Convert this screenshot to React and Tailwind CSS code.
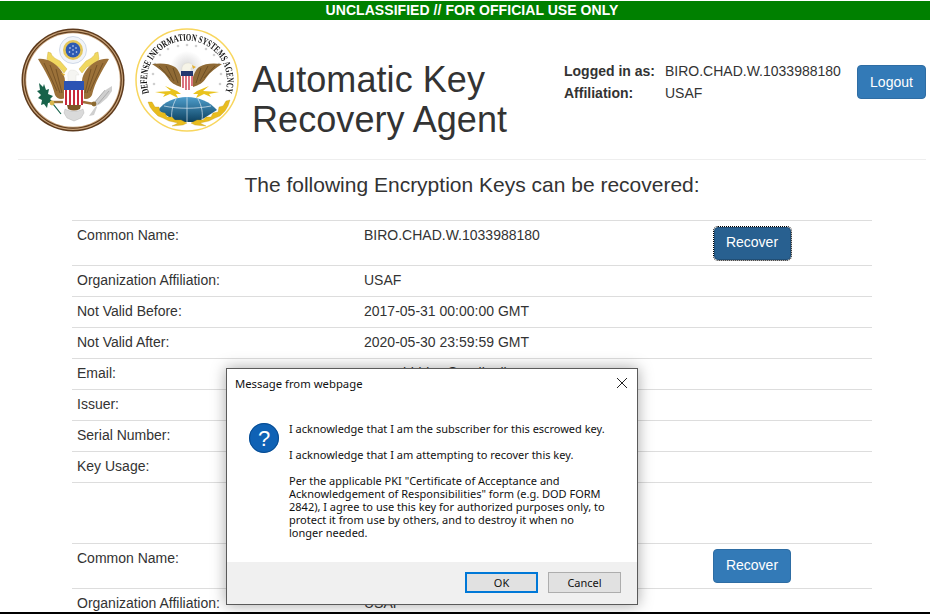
import React from 'react';

// values under the dialog can't be read in the screenshot, so they stay blank
const ROWS_ONE = [
  ['Organization Affiliation:', 'USAF'],
  ['Not Valid Before:', '2017-05-31 00:00:00 GMT'],
  ['Not Valid After:', '2020-05-30 23:59:59 GMT'],
  ['Email:', 'name.hidden@mail.mil'],
  ['Issuer:', ''],
  ['Serial Number:', ''],
  ['Key Usage:', ''],
];

const StateSeal = () => (
  <svg width="104" height="104" viewBox="0 0 104 104" className="shrink-0 blur-[0.35px]">
    <circle cx="52" cy="52" r="51.5" fill="#5d3a1c" />
    <circle cx="52" cy="52" r="50" fill="#c8a37a" />
    <circle cx="52" cy="52" r="48.8" fill="#5d3a1c" />
    <circle cx="52" cy="52" r="47.6" fill="#c8a37a" />
    <circle cx="52" cy="52" r="46.8" fill="#fff" />
    {/* crest */}
    <circle cx="52" cy="22" r="13.5" fill="#f1f4f9" stroke="#c5d0e2" strokeWidth="0.8" />
    <circle cx="52" cy="22" r="10" fill="#e4c65a" />
    <circle cx="52" cy="22" r="7.4" fill="#2d5ab3" />
    <g fill="#dfe8fa">
      <circle cx="52" cy="18" r="0.8" /><circle cx="49" cy="20" r="0.8" /><circle cx="55" cy="20" r="0.8" />
      <circle cx="52" cy="22" r="0.8" /><circle cx="48.500" cy="24" r="0.8" /><circle cx="55.500" cy="24" r="0.8" />
      <circle cx="52" cy="26" r="0.8" />
    </g>
    {/* scroll */}
    <path d="M27 24l3 1c1 4 5 6 9 8l7 8-3 4-5-6c-5-2-9-3-12-8z" fill="#f0d860" stroke="#c9a93a" strokeWidth="0.4" />
    <path d="M77 24l-3 1c-1 4-5 6-9 8l-7 8 3 4 5-6c5-2 9-3 12-8z" fill="#f0d860" stroke="#c9a93a" strokeWidth="0.4" />
    {/* wings */}
    <path d="M17 31c8-1 16 3 22 10 3 4 5 8 5 12v17c-4 2-8 1-10-3-3-13-10-24-17-36z" fill="#9b7139" />
    <path d="M88 31c-8-1-16 3-22 10-3 4-5 8-5 12v17c4 2 8 1 10-3 3-13 10-24 17-36z" fill="#9b7139" />
    <path d="M23 35l13 28M29 37l10 28M35 41l6 24M82 35L69 63M76 37L66 65M70 41l-6 24" stroke="#6f4d22" strokeWidth="0.8" fill="none" />
    {/* head */}
    <path d="M47 50c-1-5 1-8 4-8 4 0 6 2 7 5l-3 0 0 6H47z" fill="#f5f5f2" stroke="#d5d5d0" strokeWidth="0.3" />
    <path d="M44 46l-4-1 3 3z" fill="#e5b335" />
    {/* shield */}
    <rect x="43" y="53" width="20" height="9" fill="#2b53b4" />
    <rect x="43" y="62" width="20" height="15" fill="#fff" />
    <path d="M45 62v15M49 62v15M53 62v15M57 62v15M61 62v15" stroke="#c8283c" strokeWidth="2" />
    {/* tail */}
    <path d="M44 81c5 3 13 3 18 0l1 4-3 5-7 3-7-3-3-5z" fill="#dadada" stroke="#aaa" strokeWidth="0.4" />
    <path d="M46 77h14l-1 4c-4 2-8 2-12 0z" fill="#7b5526" />
    {/* olive branch */}
    <path d="M18 55l4 4 1-3 2 6 3-1-1 5 5 2-3 3 3 3-5 1-1 5-3-4-3 1 1-5-4-2 3-3-4-4 3-1z" fill="#17624a" />
    <path d="M24 68l8 8 8 10" stroke="#17624a" strokeWidth="1.2" fill="none" />
    <path d="M30 74l12 0" stroke="#9b7139" strokeWidth="2.4" />
    <circle cx="31" cy="75" r="2.4" fill="#d8b74c" />
    {/* arrows */}
    <path d="M91 58l-8 5-8 9-3 4 3 2 4-2 7-6 5-7z" fill="#cfcfcf" />
    <path d="M75 78l-7 10 5-1 3-8z" fill="#cfcfcf" />
    <path d="M84 62L74 74M88 63L77 76" stroke="#8a8a8a" strokeWidth="0.5" />
    <path d="M62 74l11 2" stroke="#9b7139" strokeWidth="2.4" />
    <circle cx="73" cy="76" r="2.4" fill="#8c6a30" />
  </svg>
);

const AgencySeal = () => (
  <svg width="104" height="104" viewBox="0 0 104 104" className="shrink-0 blur-[0.3px]">
    <defs>
      <path id="sealArc" d="M14 65A40 40 0 1 1 90 65" />
      <linearGradient id="globe" x1="0" y1="0" x2="0" y2="1">
        <stop offset="0" stopColor="#4d9dcb" />
        <stop offset="1" stopColor="#0d4160" />
      </linearGradient>
      <radialGradient id="halo">
        <stop offset="0" stopColor="#d5d5d5" />
        <stop offset="1" stopColor="#ffffff" />
      </radialGradient>
    </defs>
    <circle cx="52" cy="52" r="51" fill="#fff" stroke="#f8d65e" strokeWidth="1.5" />
    <text fontFamily="'Liberation Serif', serif" fontSize="10" fontWeight="700" fill="#111" textLength="150" lengthAdjust="spacingAndGlyphs">
      <textPath href="#sealArc" textLength="150" lengthAdjust="spacingAndGlyphs">DEFENSE INFORMATION SYSTEMS AGENCY</textPath>
    </text>
    {/* stars */}
    <g fill="#cfcfcf">
      <circle cx="25" cy="27" r="1.3" /><circle cx="33" cy="21" r="1.3" /><circle cx="43" cy="18" r="1.3" />
      <circle cx="52" cy="17" r="1.3" /><circle cx="61" cy="18" r="1.3" /><circle cx="71" cy="21" r="1.3" />
      <circle cx="79" cy="27" r="1.3" /><circle cx="20" cy="36" r="1.3" /><circle cx="84" cy="36" r="1.3" />
      <circle cx="18" cy="46" r="1.3" /><circle cx="86" cy="46" r="1.3" /><circle cx="19" cy="56" r="1.3" /><circle cx="85" cy="56" r="1.3" />
    </g>
    <circle cx="52" cy="40" r="17" fill="url(#halo)" />
    {/* wings */}
    <path d="M17 36c8-1 17-1 23 3 3 2 5 7 6 10v10c-6-2-10-4-13-9-4-6-10-10-16-14z" fill="#8f6a35" />
    <path d="M87 36c-8-1-17-1-23 3-3 2-5 7-6 10v10c6-2 10-4 13-9 4-6 10-10 16-14z" fill="#8f6a35" />
    <path d="M24 38l11 12M31 38l8 15M38 40l5 15M80 38L69 50M73 38l-8 15M66 40l-5 15" stroke="#5f4520" strokeWidth="0.7" fill="none" />
    {/* head */}
    <path d="M47 44c-1-6 2-9 6-9 3 0 5 1 5 4l-2 1v4z" fill="#f6f4e8" stroke="#cfcdbd" strokeWidth="0.3" />
    <path d="M57 37l4 2-3 2z" fill="#e5b335" />
    {/* shield */}
    <rect x="46" y="43" width="12" height="5" fill="#23386f" />
    <path d="M46 48h12v10l-6 5-6-5z" fill="#fff" />
    <path d="M48 48v12M51 48v14M54 48v14M57 48v10" stroke="#c8283c" strokeWidth="1.3" />
    {/* lightning */}
    <path d="M20 64l16-1-6-5 12 5 4 3-5 0 2 4-8-4-7 3 2-3z" fill="#e9c31e" />
    <path d="M84 64l-16-1 6-5-12 5-4 3 5 0-2 4 8-4 7 3-2-3z" fill="#e9c31e" />
    {/* globe */}
    <path d="M23 82c6-8 17-13 29-13s23 5 30 13L63 94H42z" fill="url(#globe)" />
    <path d="M52 69v25M29 78c14 3 32 3 47 0M41 71c-4 7-5 15-4 21M63 71c4 7 5 15 4 21" stroke="#dfeaf2" strokeWidth="0.7" fill="none" />
    {/* wreath */}
    <path d="M13 74l4 0 3 5 4 0 1 5 5 1 2 4 5 0 3 3 6 0 6 3-4 2-11 1 6-3-9-2-6-3-5-2-5-5-3-4z" fill="#e8bc1e" stroke="#b98f12" strokeWidth="0.3" />
    <path d="M95 72l-4 1-3 5-4 1-1 5-5 1-2 4-5 0-3 3-6 0-6 3 4 2 11 1-6-3 9-2 6-3 5-2 5-5 3-5z" fill="#e8bc1e" stroke="#b98f12" strokeWidth="0.3" />
  </svg>
);

const Recover = ({ focused }) => (
  <button
    className={`rounded text-[14px] text-white pb-[2px] align-middle ${focused ? 'ml-px h-[33px] w-[77px] pr-[1px] bg-[#286090] border border-[#204d74] outline-1 outline-dotted outline-black' : 'h-[34px] w-[78px] bg-[#337ab7] border border-[#2e6da4]'}`}
  >
    Recover
  </button>
);

const KeyTable = ({ name, rows, focused }) => (
  <table className="w-[800px] mx-auto table-fixed border-collapse text-[14px] leading-5 text-[#333]">
    <tbody>
      <tr className="border-t border-[#ddd]">
        <td className="w-[287px] px-[5px] pt-[4px] h-[45px] align-top">Common Name:</td>
        <td className="w-[354px] px-[5px] pt-[4px] align-top">{name}</td>
        <td className="align-middle"><Recover focused={focused} /></td>
      </tr>
      {rows.map(([label, value]) => (
        <tr key={label} className="border-t border-[#ddd]">
          <td className="px-[5px] pt-[4px] pb-[6px] h-[31px] align-top">{label}</td>
          <td className="px-[5px] pt-[4px] pb-[6px] align-top" colSpan={2}>{value}</td>
        </tr>
      ))}
      {rows.length > 1 && <tr className="border-t border-[#ddd]"><td className="h-[60px]" colSpan={3}></td></tr>}
    </tbody>
  </table>
);

const MessageBox = () => (
  <div
    className="absolute left-[226px] top-[368px] w-[412px] h-[237px] flex flex-col bg-white border border-[#5a5a5a] shadow-[0_0_14px_rgba(0,0,0,0.35)] text-[#111]"
    style={{ fontFamily: "'Noto Sans', sans-serif" }}
  >
    <div className="flex justify-between items-center h-[30px] pl-[8px] pr-[9px] pt-[1px] text-[11.3px]">
      <span>Message from webpage</span>
      <svg width="12" height="12" viewBox="0 0 12 12" className="-mt-[3px]"><path d="M1 1l10 10M11 1L1 11" stroke="#222" strokeWidth="1" /></svg>
    </div>
    <div className="flex flex-1 pl-[22px] pt-[24px]">
      <svg width="30" height="30" viewBox="0 0 30 30" className="shrink-0">
        <circle cx="15" cy="15" r="15" fill="#0f62b5" />
        <circle cx="15" cy="15" r="14.5" fill="none" stroke="#0a4c8f" strokeWidth="1" />
        <text x="15" y="23" textAnchor="middle" fontSize="22" fontFamily="'Liberation Sans', sans-serif" fill="#fff">?</text>
      </svg>
      <div className="ml-[10px] w-[318px] text-[11px] leading-[13px] -mt-[1px]">
        <p>I acknowledge that I am the subscriber for this escrowed key.</p>
        <p className="mt-[13px]">I acknowledge that I am attempting to recover this key.</p>
        <p className="mt-[13px]">Per the applicable PKI "Certificate of Acceptance and Acknowledgement of Responsibilities" form (e.g. DOD FORM 2842), I agree to use this key for authorized purposes only, to protect it from use by others, and to destroy it when no longer needed.</p>
      </div>
    </div>
    <div className="flex justify-end gap-[10px] h-[42px] bg-[#f0f0f0] pt-[10px] pr-[16px] text-[11px]">
      <button className="h-[21px] w-[73px] pt-[1px] bg-[#e1e1e1] border-2 border-[#0078d7]">OK</button>
      <button className="h-[21px] w-[73px] pt-[1px] bg-[#e1e1e1] border border-[#adadad]">Cancel</button>
    </div>
  </div>
);

export default function App() {
  return (
    <div className="relative h-[614px] w-[930px] overflow-hidden bg-white flex flex-col text-[#333]" style={{ fontFamily: "'Liberation Sans', Arial, sans-serif" }}>
      {/* page is wider than the window, centred content sits around x=472 */}
      <div className="flex-1 overflow-hidden w-[944px] pt-[1px]">
        <div className="h-[19px] bg-[#008000] text-center text-[14px] leading-[19px] font-bold text-white tracking-[0.05px]">
          UNCLASSIFIED // FOR OFFICIAL USE ONLY
        </div>
        <header className="ml-[18px] w-[908px] h-[140px] border-b border-[#eee] flex">
          <div className="flex items-start pt-[8px] pl-[3px] gap-[10px] shrink-0">
            <StateSeal />
            <AgencySeal />
          </div>
          <h1 className="ml-[13px] mt-[40px] text-[36px] leading-[39.6px] w-[290px] shrink-0 tracking-[0.07px]">Automatic Key Recovery Agent</h1>
          <div className="ml-[22px] mt-[40px] text-[14px] leading-[22px] shrink-0">
            <div className="flex"><b className="w-[101px]">Logged in as:</b><span>BIRO.CHAD.W.1033988180</span></div>
            <div className="flex"><b className="w-[101px]">Affiliation:</b><span>USAF</span></div>
          </div>
          <button className="ml-auto mt-[45px] h-[34px] w-[69px] shrink-0 bg-[#337ab7] border border-[#2e6da4] rounded text-[14px] text-white">Logout</button>
        </header>
        <h2 className="text-center text-[21px] leading-[22px] mt-[14px] mb-[24px]">The following Encryption Keys can be recovered:</h2>
        <KeyTable name="BIRO.CHAD.W.1033988180" rows={ROWS_ONE} focused />
        <KeyTable name="BIRO.CHAD.W.1033988180" rows={[['Organization Affiliation:', 'USAF']]} />
      </div>
      <div className="h-[2px] shrink-0 bg-black" />
      <MessageBox />
    </div>
  );
}
